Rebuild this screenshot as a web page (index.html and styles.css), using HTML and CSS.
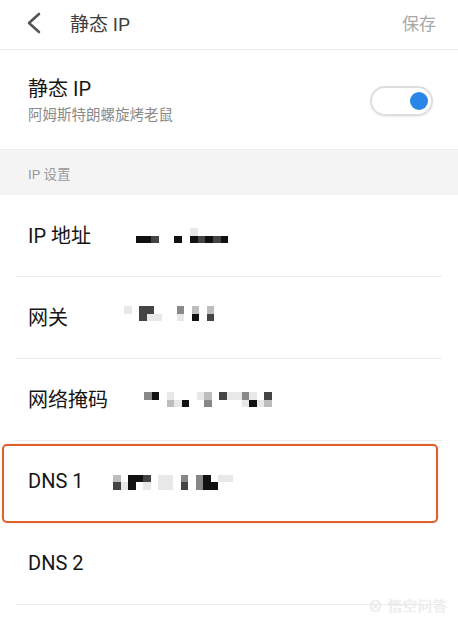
FILE: index.html
```html
<!DOCTYPE html>
<html lang="zh-CN">
<head>
<meta charset="utf-8">
<title>静态 IP</title>
<link rel="stylesheet" href="styles.css">
</head>
<body>
<div class="screen">
  <header class="topbar">
    <svg class="back" width="20" height="24" viewBox="0 0 20 24"><polyline points="13,3 3,12 13,21" fill="none" stroke="#555" stroke-width="2.6" stroke-linecap="round" stroke-linejoin="round"/></svg>
    <div class="title">静态 IP</div>
    <div class="save">保存</div>
  </header>

  <section class="switch-row">
    <div class="switch-text">
      <div class="switch-title">静态 IP</div>
      <div class="switch-sub">阿姆斯特朗螺旋烤老鼠</div>
    </div>
    <div class="toggle"><span class="knob"></span></div>
  </section>

  <div class="section-head">IP 设置</div>

  <div class="list">
    <div class="row">
      <div class="label">IP 地址</div>
      <div class="mosaic m-ip">
        <span class="e"></span><span class="e"></span><span class="e"></span><span class="e"></span><span class="e"></span><span class="e"></span><span class="e"></span><span class="f"></span><span class="e"></span><span class="e"></span><span class="e"></span><span class="e"></span>
        <span class="k"></span><span class="k"></span><span class="d"></span><span class="e"></span><span class="e"></span><span class="k"></span><span class="e"></span><span class="k"></span><span class="d"></span><span class="k"></span><span class="d"></span><span class="k"></span>
      </div>
    </div>
    <div class="row">
      <div class="label">网关</div>
      <div class="mosaic m-gw">
        <span class="f"></span><span class="e"></span><span class="d"></span><span class="d"></span><span class="e"></span><span class="e"></span><span class="e"></span><span class="m"></span><span class="e"></span><span class="l"></span><span class="e"></span><span class="l"></span><span class="e"></span><span class="e"></span>
        <span class="e"></span><span class="e"></span><span class="d"></span><span class="f"></span><span class="f"></span><span class="e"></span><span class="e"></span><span class="f"></span><span class="e"></span><span class="k"></span><span class="e"></span><span class="d"></span><span class="e"></span><span class="e"></span>
      </div>
    </div>
    <div class="row">
      <div class="label">网络掩码</div>
      <div class="mosaic m-mask">
        <span class="m"></span><span class="k"></span><span class="e"></span><span class="f"></span><span class="e"></span><span class="e"></span><span class="e"></span><span class="f"></span><span class="l"></span><span class="e"></span><span class="d"></span><span class="f"></span><span class="f"></span><span class="m"></span><span class="f"></span><span class="e"></span><span class="d"></span>
        <span class="e"></span><span class="e"></span><span class="e"></span><span class="l"></span><span class="f"></span><span class="k"></span><span class="e"></span><span class="e"></span><span class="m"></span><span class="e"></span><span class="e"></span><span class="e"></span><span class="e"></span><span class="f"></span><span class="k"></span><span class="f"></span><span class="l"></span>
      </div>
    </div>
    <div class="row row-hl">
      <div class="label">DNS 1</div>
      <div class="mosaic m-dns">
        <span class="l"></span><span class="e"></span><span class="k"></span><span class="k"></span><span class="d"></span><span class="e"></span><span class="f"></span><span class="f"></span><span class="e"></span><span class="m"></span><span class="e"></span><span class="m"></span><span class="k"></span><span class="e"></span><span class="f"></span><span class="f"></span>
        <span class="d"></span><span class="f"></span><span class="k"></span><span class="e"></span><span class="f"></span><span class="e"></span><span class="f"></span><span class="f"></span><span class="e"></span><span class="d"></span><span class="e"></span><span class="m"></span><span class="k"></span><span class="k"></span><span class="e"></span><span class="e"></span>
      </div>
    </div>
    <div class="row">
      <div class="label">DNS 2</div>
    </div>
  </div>

  <div class="watermark">⊗ 悟空问答</div>
</div>
</body>
</html>
```

FILE: styles.css
```css
html, body {
  margin: 0;
  padding: 0;
  background: #fff;
}

.screen {
  position: relative;
  width: 458px;
  height: 617px;
  overflow: hidden;
  font-family: "Roboto", "Noto Sans CJK SC", "Noto Sans", sans-serif;
  color: #151515;
}

.topbar {
  height: 45px;
  display: flex;
  align-items: center;
  padding: 0 22px 4px 26px;
  border-bottom: 1px solid #ececec;
}

.back {
  flex: none;
}

.title {
  margin-left: 24px;
  font-size: 19px;
  color: #404040;
}

.save {
  margin-left: auto;
  font-size: 17px;
  color: #a8a8a8;
}

.switch-row {
  height: 99px;
  display: flex;
  align-items: center;
  padding: 0 25px 0 28px;
  border-bottom: 1px solid #ececec;
}

.switch-text {
  display: flex;
  flex-direction: column;
  gap: 4px;
  margin-top: 3px;
}

.switch-title {
  font-size: 20px;
  line-height: 26px;
  color: #151515;
}

.switch-sub {
  font-size: 14.5px;
  line-height: 20px;
  color: #8a8a8a;
}

.toggle {
  margin-left: auto;
  width: 56px;
  height: 26px;
  border: 2px solid #dedede;
  border-radius: 16px;
  display: flex;
  align-items: center;
  justify-content: flex-end;
  padding-right: 3px;
  box-shadow: 0 1px 2px rgba(0,0,0,0.08);
  margin-top: 2px;
}

.knob {
  width: 18px;
  height: 18px;
  border-radius: 50%;
  background: #2a86e6;
}

.section-head {
  height: 45px;
  background: #f4f4f4;
  display: flex;
  align-items: center;
  padding-left: 28px;
  font-size: 13.5px;
  color: #9a9a9a;
}

.list {
  display: flex;
  flex-direction: column;
}

.row {
  height: 79px;
  margin: 0 16px;
  padding: 0 0 2px 12px;
  border-bottom: 1px solid #ececec;
  display: flex;
  align-items: center;
}

.row-hl {
  height: 79px;
  box-sizing: border-box;
  margin: 3px 20px 0 2px;
  padding: 0 0 5px 24px;
  border: 2px solid #e0602a;
  border-radius: 5px;
  box-shadow: 0 0 2px rgba(224, 96, 42, 0.25);
}

.label {
  font-size: 20px;
  color: #151515;
  white-space: nowrap;
}

.mosaic {
  display: grid;
  grid-auto-rows: 7.5px;
  margin-top: 2px;
}

.mosaic span {
  display: block;
}

.mosaic .k { background: #111; }
.mosaic .d { background: #444; }
.mosaic .m { background: #888; }
.mosaic .l { background: #bdbdbd; }
.mosaic .f { background: #e8e8e8; }
.mosaic .e { background: transparent; }

.m-ip {
  grid-template-columns: repeat(12, 7.7px);
  margin-left: 45px;
}

.m-gw {
  grid-template-columns: repeat(14, 7.5px);
  margin-left: 56px;
  margin-top: -6px;
}

.m-mask {
  grid-template-columns: repeat(17, 7.5px);
  margin-left: 36px;
}

.m-dns {
  grid-template-columns: repeat(16, 7.5px);
  margin-left: 30px;
  margin-top: 2px;
}

.watermark {
  position: absolute;
  right: 10px;
  bottom: 2px;
  font-size: 14px;
  color: #f0f0f0;
  text-shadow: 0 0 1px #d8d8d8;
  letter-spacing: 1px;
}
```
